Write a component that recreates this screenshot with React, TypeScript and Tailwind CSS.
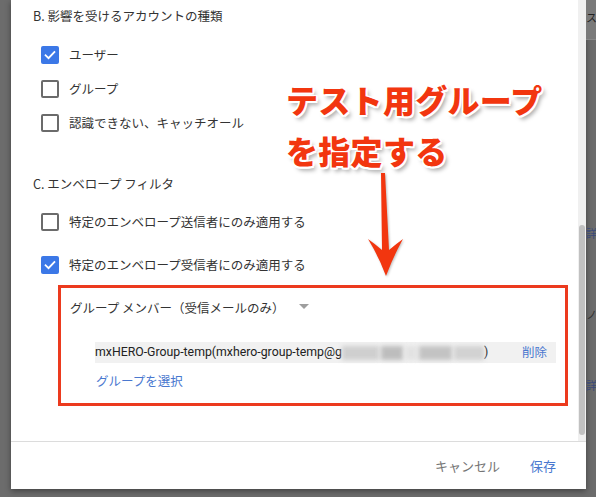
const jp = "font-['Noto_Sans_CJK_JP',sans-serif]";

function Checkbox({ checked }: { checked?: boolean }) {
  if (checked) {
    return (
      <div className="w-[18px] h-[18px] rounded-[2px] bg-[#3b78e7] flex items-center justify-center shrink-0">
        <svg width="14" height="14" viewBox="0 0 24 24" fill="none" stroke="white" strokeWidth="3.2" strokeLinecap="square">
          <path d="M4.5 12.5l5 5L19.5 7" />
        </svg>
      </div>
    )
  }
  return <div className="w-[18px] h-[18px] rounded-[2px] border-2 border-[#6b6b6b] shrink-0" />
}

function Row({ checked, label, className }: { checked?: boolean; label: string; className: string }) {
  return (
    <div className={`flex items-center gap-[10px] h-[18px] pl-2 ${className}`}>
      <Checkbox checked={checked} />
      <span className="text-[12.5px] text-[#333]">{label}</span>
    </div>
  )
}

export default function App() {
  return (
    <div className={`relative w-[596px] h-[497px] bg-[#6c6c6c] overflow-hidden flex ${jp}`}>
      {/* dialog */}
      <div className="ml-[11px] w-[575px] h-[489px] bg-white flex flex-col shadow-[0_2px_6px_rgba(0,0,0,0.4)]">
        <div className="h-[441px] flex">
          <div className="flex-1 pl-[22px] flex flex-col">
            <div className="mt-[6px] h-[20px] flex items-center text-[12.5px] text-[#333]">
              B. 影響を受けるアカウントの種類
            </div>
            <Row checked label="ユーザー" className="mt-[20px]" />
            <Row label="グループ" className="mt-[16px]" />
            <Row label="認識できない、キャッチオール" className="mt-[16px]" />

            <div className="mt-[42px] h-[20px] flex items-center text-[12.5px] text-[#333]">
              C. エンベロープ フィルタ
            </div>
            <Row label="特定のエンベロープ送信者にのみ適用する" className="mt-[19px]" />
            <Row checked label="特定のエンベロープ受信者にのみ適用する" className="mt-[25px]" />

            <div className="mt-[11px] ml-[25px] w-[510px] h-[121px] border-[3px] border-[#ec3a1e] flex flex-col">
              <div className="mt-[10px] ml-[9px] h-[20px] flex items-center gap-[14px] text-[12.5px] text-[#333]">
                <span>グループ メンバー（受信メールのみ）</span>
                <svg width="10" height="6" viewBox="0 0 10 6" className="mt-[-2px]">
                  <path d="M0 0h10L5 5z" fill="#9e9e9e" />
                </svg>
              </div>
              <div className="mt-[24px] ml-[34px] w-[461px] h-[21px] bg-[#f1f1f1] flex items-center pr-[9px]">
                <span className="font-['Roboto',sans-serif] text-[12.3px] text-[#222] whitespace-nowrap">
                  mxHERO-Group-temp(mxhero-group-temp@g
                </span>
                <span className="flex items-center gap-[2px] h-[16px] w-[142px]">
                  <span className="h-[14px] w-[38px] bg-[#cfcfcf] blur-[2px]" />
                  <span className="h-[14px] w-[22px] bg-[#bdbdbd] blur-[2px]" />
                  <span className="h-[14px] w-[12px] bg-[#e2e2e2] blur-[2px]" />
                  <span className="h-[14px] w-[34px] bg-[#c3c3c3] blur-[2px]" />
                  <span className="h-[14px] w-[30px] bg-[#d2d2d2] blur-[2px]" />
                </span>
                <span className="font-['Roboto',sans-serif] text-[12.3px] text-[#222]">)</span>
                <span className="ml-auto text-[12.5px] text-[#4a78cf]">削除</span>
              </div>
              <div className="mt-[8px] ml-[35px] h-[20px] flex items-center text-[12.5px] text-[#4a78cf]">
                グループを選択
              </div>
            </div>
          </div>
          {/* scrollbar */}
          <div className="w-[8px] bg-[#f0f0f0] flex flex-col">
            <div className="mt-[225px] h-[210px] mx-[1px] rounded-full bg-[#c1c1c1]" />
          </div>
        </div>
        <div className="h-px bg-[#dcdcdc]" />
        <div className="flex-1 flex items-center justify-end gap-[30px] pr-[30px] text-[13px]">
          <span className="text-[#757575]">キャンセル</span>
          <span className="text-[#4a78cf]">保存</span>
        </div>
      </div>

      {/* page behind on the right */}
      <div className="flex-1 flex flex-col text-[11px] leading-none overflow-hidden">
        <div className="h-[40px] bg-[#7a7a7a] border-b border-[#888] pt-[12px] text-[#222]">ス</div>
        <div className="mt-[188px] text-[#3a4a78]">詳</div>
        <div className="mt-[70px] text-[#333]">ノ</div>
        <div className="mt-[60px] text-[#3a4a78]">詳</div>
      </div>

      {/* annotation */}
      <div className="absolute left-[286px] top-[74px] text-[32px] leading-[51px] font-black text-[#f2360f] tracking-[0.3px] [text-shadow:1.5px_1.5px_0_#fff,-1.5px_-1.5px_0_#fff,1.5px_-1.5px_0_#fff,-1.5px_1.5px_0_#fff,0_2px_0_#fff,2px_0_0_#fff,3px_4px_4px_rgba(0,0,0,0.35)]">
        <div>テスト用グループ</div>
        <div>を指定する</div>
      </div>
      <svg className="absolute left-0 top-0" width="596" height="497" viewBox="0 0 596 497">
        <path
          d="M381 173 L385 173 L389 250 Q396 244 403 239 Q393 257 386 276 Q379 257 368 239 Q375 244 382 250 Z"
          fill="#f2360f"
          style={{ filter: 'drop-shadow(1px 1px 1px rgba(0,0,0,0.25))' }}
        />
      </svg>
    </div>
  )
}
